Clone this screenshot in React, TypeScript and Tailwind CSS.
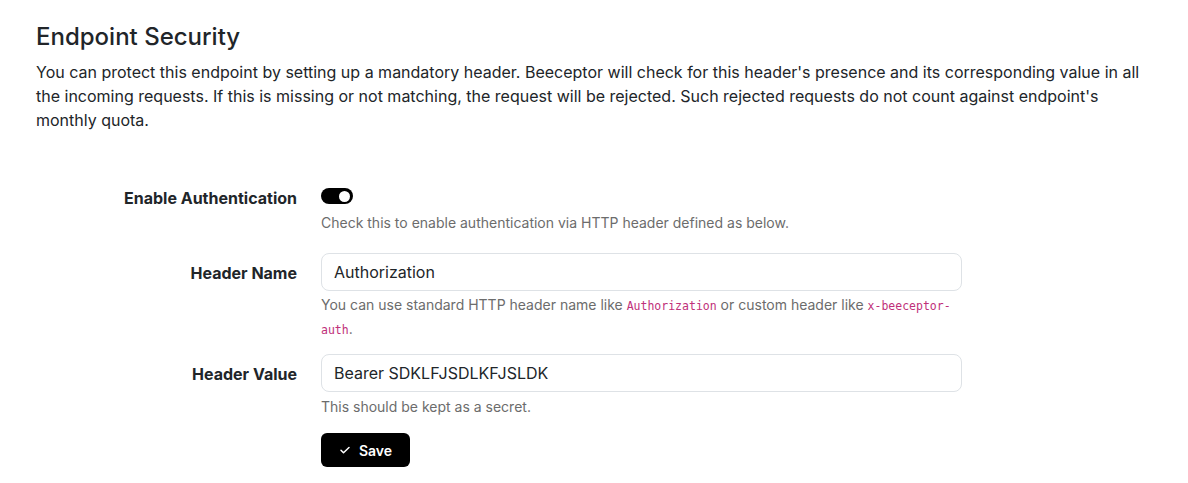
import React from "react";

export default function App() {
  return (
    <div className="min-h-[483px] bg-white text-[#212529] px-[36px] pt-[22px]" style={{ fontFamily: "Inter, 'Noto Sans', sans-serif" }}>
      <h2 className="text-[24px] leading-[29px] font-medium mb-[9px]">Endpoint Security</h2>
      <p className="text-[16px] leading-[24px] max-w-[1116px]">
        You can protect this endpoint by setting up a mandatory header. Beeceptor will check for this header's presence and its corresponding value in all the incoming requests. If this is missing or not matching, the request will be rejected. Such rejected requests do not count against endpoint's monthly quota.
      </p>

      <div className="mt-[48px] grid grid-cols-[261px_641px] gap-x-[24px]">
        {/* Enable Authentication */}
        <div className="text-right font-bold text-[16px] leading-[24px] pt-[6px]">Enable Authentication</div>
        <div className="pt-[8px]">
          <div className="w-[32px] h-[16px] rounded-full bg-black flex items-center justify-end pr-[3px]">
            <div className="w-[11px] h-[11px] rounded-full bg-white" />
          </div>
          <div className="text-[14px] leading-[21px] text-[#6c6c6c] mt-[8px]">Check this to enable authentication via HTTP header defined as below.</div>
        </div>

        {/* Header Name */}
        <div className="text-right font-bold text-[16px] leading-[24px] pt-[28px]">Header Name</div>
        <div className="pt-[20px]">
          <div className="h-[38px] border border-[#dee2e6] rounded-[8px] px-[12px] flex items-center text-[16px]">Authorization</div>
          <div className="text-[14px] leading-[24px] text-[#6c6c6c] mt-[2px]">
            You can use standard HTTP header name like <code className="text-[11.5px] leading-[14px] text-[#c0307a]" style={{ fontFamily: "'DejaVu Sans Mono', monospace" }}>Authorization</code> or custom header like <code className="text-[11.5px] leading-[14px] text-[#c0307a]" style={{ fontFamily: "'DejaVu Sans Mono', monospace" }}>x-beeceptor-auth</code>.
          </div>
        </div>

        {/* Header Value */}
        <div className="text-right font-bold text-[16px] leading-[24px] pt-[21px]">Header Value</div>
        <div className="pt-[13px]">
          <div className="h-[38px] border border-[#dee2e6] rounded-[8px] px-[12px] flex items-center text-[16px]">Bearer SDKLFJSDLKFJSLDK</div>
          <div className="text-[14px] leading-[21px] text-[#6c6c6c] mt-[4px]">This should be kept as a secret.</div>
          <button className="mt-[16px] h-[34px] w-[89px] rounded-[6px] bg-black text-white flex items-center justify-center gap-[8px] text-[14px] font-semibold">
            <svg width="12" height="12" viewBox="0 0 24 24" fill="none" stroke="white" strokeWidth="3" strokeLinecap="round" strokeLinejoin="round"><path d="M4 12.5l5 5L20 7" /></svg>
            Save
          </button>
        </div>
      </div>
    </div>
  );
}
